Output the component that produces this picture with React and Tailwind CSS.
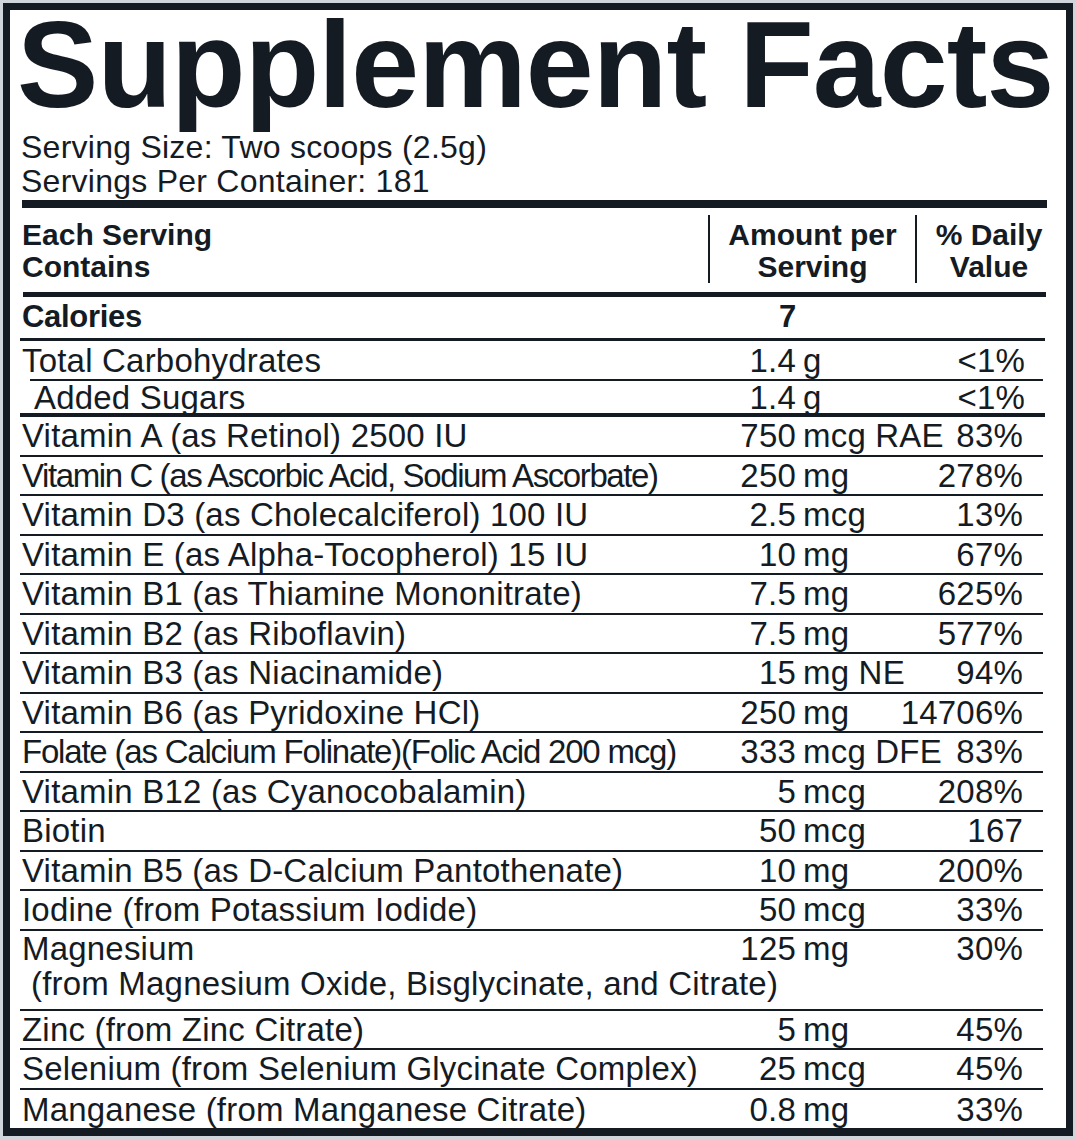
const INK = 'text-[#151b23]'

const NUTRIENTS = [
    { name: 'Vitamin A (as Retinol) 2500 IU', num: '750', unit: 'mcg RAE', dv: '83%' },
    { name: 'Vitamin C (as Ascorbic Acid, Sodium Ascorbate)', num: '250', unit: 'mg', dv: '278%', track: 'tracking-[-1.4px]' },
    { name: 'Vitamin D3 (as Cholecalciferol) 100 IU', num: '2.5', unit: 'mcg', dv: '13%' },
    { name: 'Vitamin E (as Alpha-Tocopherol) 15 IU', num: '10', unit: 'mg', dv: '67%' },
    { name: 'Vitamin B1 (as Thiamine Mononitrate)', num: '7.5', unit: 'mg', dv: '625%' },
    { name: 'Vitamin B2 (as Riboflavin)', num: '7.5', unit: 'mg', dv: '577%' },
    { name: 'Vitamin B3 (as Niacinamide)', num: '15', unit: 'mg NE', dv: '94%' },
    { name: 'Vitamin B6 (as Pyridoxine HCl)', num: '250', unit: 'mg', dv: '14706%' },
    { name: 'Folate (as Calcium Folinate)(Folic Acid 200 mcg)', num: '333', unit: 'mcg DFE', dv: '83%', track: 'tracking-[-1.2px]' },
    { name: 'Vitamin B12 (as Cyanocobalamin)', num: '5', unit: 'mcg', dv: '208%' },
    { name: 'Biotin', num: '50', unit: 'mcg', dv: '167' },
    { name: 'Vitamin B5 (as D-Calcium Pantothenate)', num: '10', unit: 'mg', dv: '200%' },
    { name: 'Iodine (from Potassium Iodide)', num: '50', unit: 'mcg', dv: '33%' },
    { name: 'Magnesium', sub: '(from Magnesium Oxide, Bisglycinate, and Citrate)', num: '125', unit: 'mg', dv: '30%' },
    { name: 'Zinc (from Zinc Citrate)', num: '5', unit: 'mg', dv: '45%' },
    { name: 'Selenium (from Selenium Glycinate Complex)', num: '25', unit: 'mcg', dv: '45%' },
    { name: 'Manganese (from Manganese Citrate)', num: '0.8', unit: 'mg', dv: '33%' }
]

function Amounts({ num, unit, dv, bold }) {
    return (
        <>
            <div className={`w-[96px] shrink-0 text-right ${bold ? 'font-bold' : ''}`}>{num}</div>
            <div className="flex-1 min-w-0 pl-[7px] whitespace-nowrap">{unit}</div>
            <div className="w-[150px] shrink-0 text-right pr-[20px] whitespace-nowrap">{dv}</div>
        </>
    )
}

export default function App() {
    return (
        <div className="w-[1076px] h-[1139px] bg-[#cfd5da] p-[3px]" style={{ fontFamily: '"Liberation Sans", Arial, sans-serif' }}>
            <div className={`h-full bg-white border-[7px] border-b-[8px] border-[#151b23] pl-[10px] pr-[21px] ${INK}`}>

                {/* title + serving info */}
                <div className="h-[110px] leading-[110px] text-[122px] font-bold tracking-[-0.9px] whitespace-nowrap ml-[-3px] mr-[-21px]">
                    Supplement Facts
                </div>
                <div className="mt-[10px] text-[32px] leading-[34px] tracking-[0.25px] pl-[1px]">
                    <div>Serving Size: Two scoops (2.5g)</div>
                    <div>Servings Per Container: 181</div>
                </div>
                <div className="mt-[2px] h-[8px] bg-[#151b23] ml-[2px] mr-[-2px]" />

                {/* column header */}
                <div className="flex pt-[7px] pb-[9px] text-[30px] leading-[32px] font-bold">
                    <div className="w-[688px] shrink-0 pt-[4px] pl-[2px]">
                        <div>Each Serving</div>
                        <div>Contains</div>
                    </div>
                    <div className="w-[207px] shrink-0 h-[68px] border-l-2 border-[#151b23] pt-[4px] text-center">
                        <div>Amount per</div>
                        <div>Serving</div>
                    </div>
                    <div className="flex-1 h-[68px] border-l-2 border-[#151b23] pt-[4px] pl-[16px] text-center">
                        <div>% Daily</div>
                        <div>Value</div>
                    </div>
                </div>
                <div className="h-[5px] bg-[#151b23] ml-[3px] mr-[-1px]" />

                {/* calories + carbs */}
                <div className="flex items-center h-[44px] border-b-[3px] border-[#151b23] text-[31px] font-bold tracking-[-0.3px]">
                    <div className="w-[680px] shrink-0 pl-[2px]">Calories</div>
                    <Amounts num="7" unit="" dv="" bold />
                </div>
                <div className="text-[33px] leading-[35px] tracking-[0.2px]">
                    <div className="flex items-center h-[38px]">
                        <div className="w-[680px] shrink-0 pl-[2px]">Total Carbohydrates</div>
                        <Amounts num="1.4" unit="g" dv="<1%" />
                    </div>
                    <div className="h-[2px] bg-[#151b23] ml-[10px] mr-[2px]" />
                    <div className="flex items-center h-[32px]">
                        <div className="w-[680px] shrink-0 pl-[14px]">Added Sugars</div>
                        <Amounts num="1.4" unit="g" dv="<1%" />
                    </div>
                    <div className="h-[4px] bg-[#151b23]" />

                    {/* vitamins & minerals */}
                    {NUTRIENTS.map((n, i) => (
                        <div
                            key={n.name}
                            className={`flex border-[#151b23] mr-[2px]
                                ${i < NUTRIENTS.length - 1 ? 'border-b-2' : ''}
                                ${n.sub ? 'h-[80px] items-start' : 'h-[39.5px] items-center'}`}
                        >
                            <div className={`w-[680px] shrink-0 pl-[2px] whitespace-nowrap ${n.track || ''}`}>
                                {n.name}
                                {n.sub && <div className="pl-[9px]">{n.sub}</div>}
                            </div>
                            <Amounts num={n.num} unit={n.unit} dv={n.dv} />
                        </div>
                    ))}
                </div>
            </div>
        </div>
    )
}
